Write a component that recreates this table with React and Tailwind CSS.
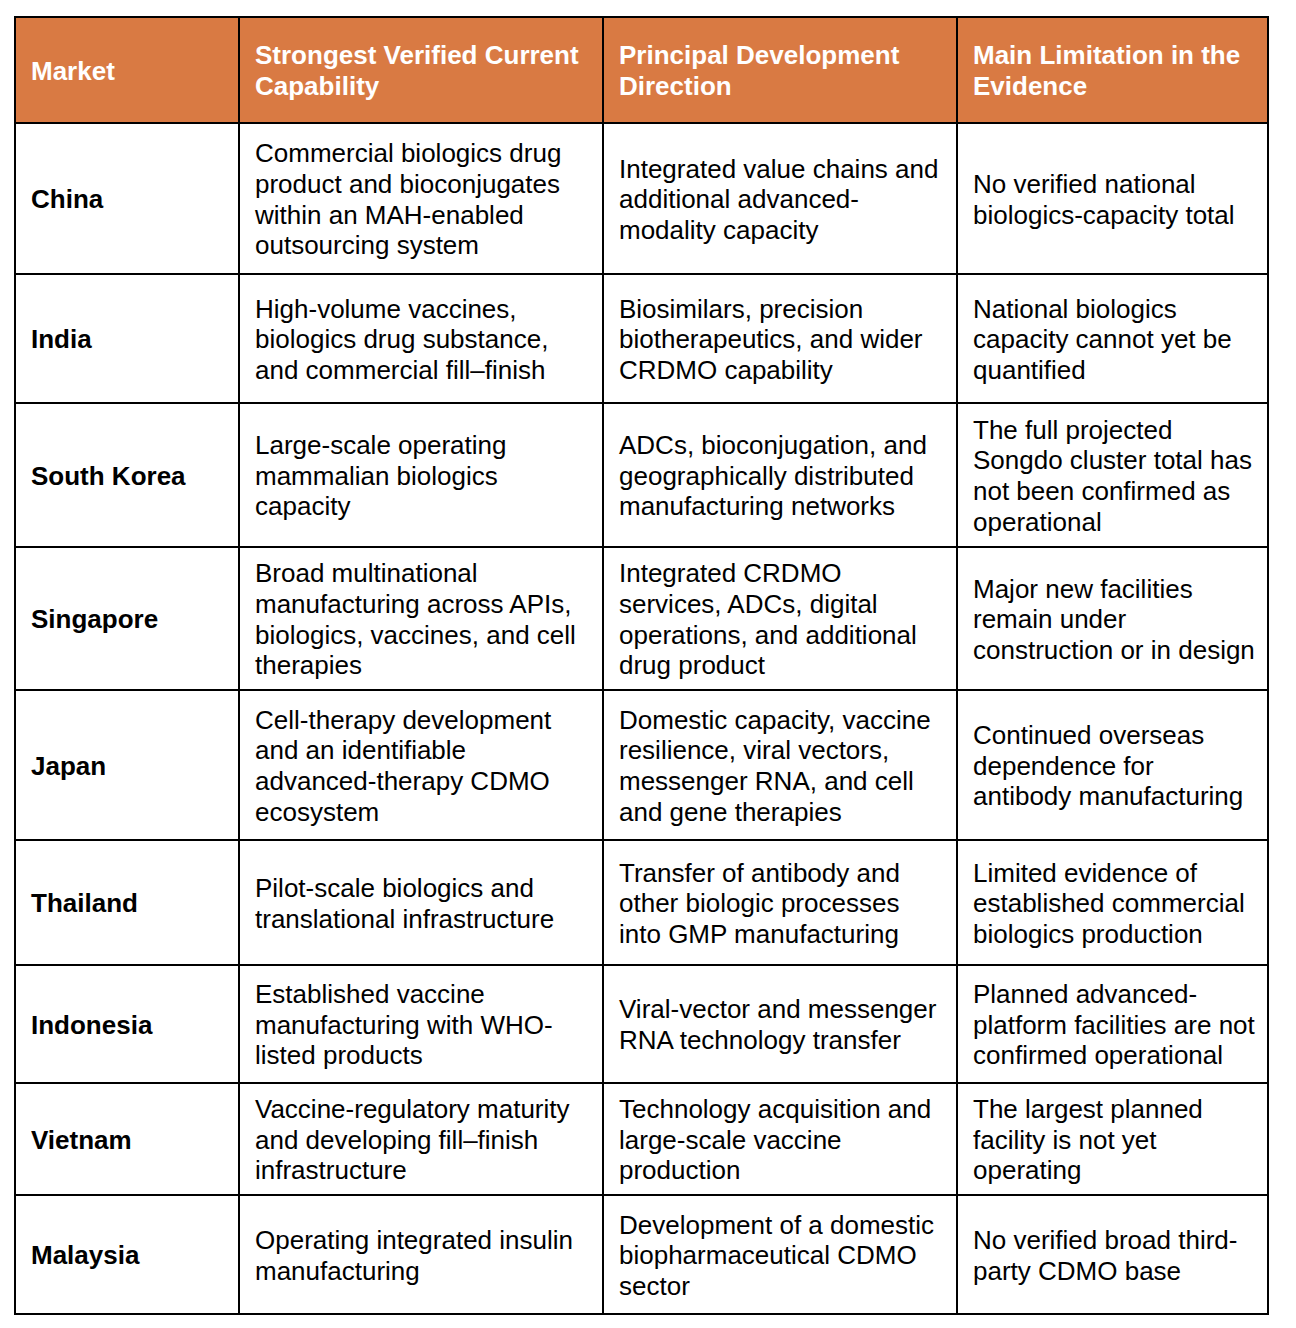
const header = [
  ['Market'],
  ['Strongest Verified Current', 'Capability'],
  ['Principal Development', 'Direction'],
  ['Main Limitation in the', 'Evidence'],
];

// each row: market, capability lines, direction lines, limitation lines
const rows = [
  {
    market: 'China',
    h: 'h-[151px]',
    cells: [
      ['Commercial biologics drug', 'product and bioconjugates', 'within an MAH-enabled', 'outsourcing system'],
      ['Integrated value chains and', 'additional advanced-', 'modality capacity'],
      ['No verified national', 'biologics-capacity total'],
    ],
  },
  {
    market: 'India',
    h: 'h-[129px]',
    cells: [
      ['High-volume vaccines,', 'biologics drug substance,', 'and commercial fill–finish'],
      ['Biosimilars, precision', 'biotherapeutics, and wider', 'CRDMO capability'],
      ['National biologics', 'capacity cannot yet be', 'quantified'],
    ],
  },
  {
    market: 'South Korea',
    h: 'h-[144px]',
    cells: [
      ['Large-scale operating', 'mammalian biologics', 'capacity'],
      ['ADCs, bioconjugation, and', 'geographically distributed', 'manufacturing networks'],
      ['The full projected', 'Songdo cluster total has', 'not been confirmed as', 'operational'],
    ],
  },
  {
    market: 'Singapore',
    h: 'h-[143px]',
    cells: [
      ['Broad multinational', 'manufacturing across APIs,', 'biologics, vaccines, and cell', 'therapies'],
      ['Integrated CRDMO', 'services, ADCs, digital', 'operations, and additional', 'drug product'],
      ['Major new facilities', 'remain under', 'construction or in design'],
    ],
  },
  {
    market: 'Japan',
    h: 'h-[150px]',
    cells: [
      ['Cell-therapy development', 'and an identifiable', 'advanced-therapy CDMO', 'ecosystem'],
      ['Domestic capacity, vaccine', 'resilience, viral vectors,', 'messenger RNA, and cell', 'and gene therapies'],
      ['Continued overseas', 'dependence for', 'antibody manufacturing'],
    ],
  },
  {
    market: 'Thailand',
    h: 'h-[125px]',
    cells: [
      ['Pilot-scale biologics and', 'translational infrastructure'],
      ['Transfer of antibody and', 'other biologic processes', 'into GMP manufacturing'],
      ['Limited evidence of', 'established commercial', 'biologics production'],
    ],
  },
  {
    market: 'Indonesia',
    h: 'h-[118px]',
    cells: [
      ['Established vaccine', 'manufacturing with WHO-', 'listed products'],
      ['Viral-vector and messenger', 'RNA technology transfer'],
      ['Planned advanced-', 'platform facilities are not', 'confirmed operational'],
    ],
  },
  {
    market: 'Vietnam',
    h: 'h-[112px]',
    cells: [
      ['Vaccine-regulatory maturity', 'and developing fill–finish', 'infrastructure'],
      ['Technology acquisition and', 'large-scale vaccine', 'production'],
      ['The largest planned', 'facility is not yet', 'operating'],
    ],
  },
  {
    market: 'Malaysia',
    h: 'h-[119px]',
    cells: [
      ['Operating integrated insulin', 'manufacturing'],
      ['Development of a domestic', 'biopharmaceutical CDMO', 'sector'],
      ['No verified broad third-', 'party CDMO base'],
    ],
  },
];

const cols = 'grid grid-cols-[224px_364px_354px_311px]';

function Cell({ lines, bold }) {
  return (
    <div className="flex items-center border-r-2 border-b-2 border-black pt-[2px] pl-[15px]">
      <div className={bold ? 'font-bold' : ''}>
        {lines.map((l) => (
          <span key={l} className="block whitespace-nowrap">{l}</span>
        ))}
      </div>
    </div>
  );
}

export default function App() {
  return (
    <div className="min-h-[1328px] bg-white pt-[16px] pl-[14px] font-['Liberation_Sans',Arial,sans-serif] text-[26px] leading-[30.6px] text-black">
      <div className="w-[1255px] border-l-2 border-t-2 border-black">
        <div className={`${cols} h-[106px] bg-[#d97a43] text-white`}>
          {header.map((lines, i) => (
            <Cell key={i} lines={lines} bold />
          ))}
        </div>
        {rows.map((r) => (
          <div key={r.market} className={`${cols} ${r.h}`}>
            <Cell lines={[r.market]} bold />
            {r.cells.map((lines, i) => (
              <Cell key={i} lines={lines} />
            ))}
          </div>
        ))}
      </div>
    </div>
  );
}
